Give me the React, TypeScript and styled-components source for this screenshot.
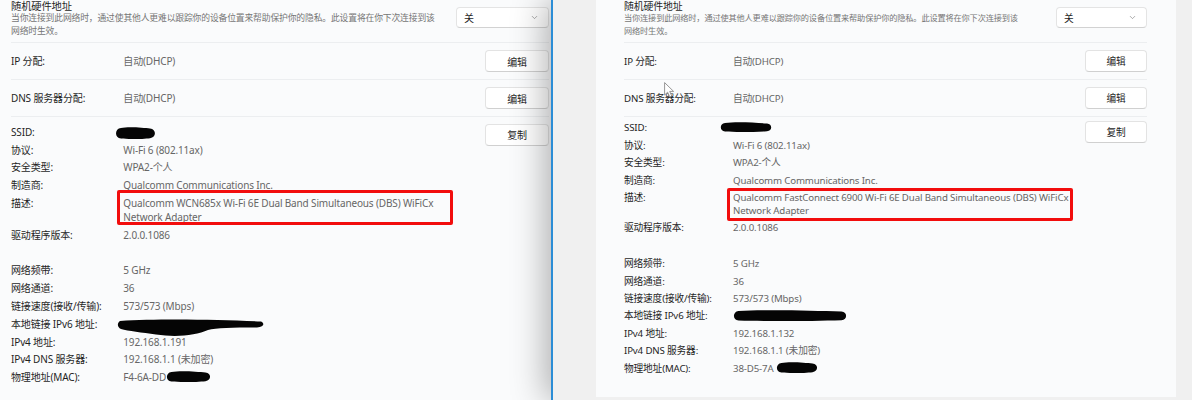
import React from "react";
import styled, { createGlobalStyle } from "styled-components";
import { ChevronDown } from "lucide-react";

type Metrics = {
  fs: number;
  titleFs: number;
  subFs: number;
  lh: number;
  pad: number;
  labelW: number;
  infoTop: number;
  copyTop: number;
  spacer: number;
  padL: number;
  padR: number;
  btnW: number;
  ddW: number;
};

type BlobSpec = { x: number; y: number; w: number; h: number; d?: string };
type BoxSpec = { x: number; y: number; w: number; h: number };
type Row = { label: string; lines?: string[]; blob?: BlobSpec; box?: BoxSpec };

type PanelData = {
  m: Metrics;
  group1: Row[];
  group2: Row[];
};

const GlobalStyle = createGlobalStyle`
  html, body { margin: 0; padding: 0; }
  body {
    width: 1192px;
    height: 400px;
    overflow: hidden;
    background: #efefef;
    font-family: "Noto Sans", "Noto Sans CJK SC", sans-serif;
  }
`;

const Screen = styled.div`
  display: flex;
  width: 1192px;
  height: 400px;
  overflow: hidden;
  background: #efefef;
`;

const BackWindow = styled.div`
  flex: none;
  display: flex;
  width: 551px;
  height: 400px;
  overflow: hidden;
  background: #fafbfc;
  position: relative;
  z-index: 0;
`;

const FrontWindow = styled.div`
  flex: 1;
  min-width: 0;
  display: flex;
  align-items: flex-start;
  height: 400px;
  box-sizing: border-box;
  border-left: 2px solid #2b8dd6;
  background: #f0f0f0;
  padding: 0 16px 3px 43px;
  box-shadow: -6px 0 32px rgba(0, 0, 0, 0.3);
  position: relative;
  z-index: 1;
`;

const Card = styled.div<{ $m: Metrics; $fill?: boolean }>`
  --fs: ${(p) => p.$m.fs}px;
  --titleFs: ${(p) => p.$m.titleFs}px;
  --subFs: ${(p) => p.$m.subFs}px;
  --lh: ${(p) => p.$m.lh}px;
  --pad: ${(p) => p.$m.pad}px;
  --labelW: ${(p) => p.$m.labelW}px;
  --btnW: ${(p) => p.$m.btnW}px;
  --ddW: ${(p) => p.$m.ddW}px;
  flex: 1;
  min-width: 0;
  height: ${(p) => (p.$fill ? "400px" : "397px")};
  box-sizing: border-box;
  background: #fafbfc;
  padding: 0 ${(p) => p.$m.padR}px 0 ${(p) => p.$m.padL}px;
  display: flex;
  flex-direction: column;
  position: relative;
  color: #1f1f1f;
  letter-spacing: -0.15px;
`;

const TopSection = styled.div`
  height: 43px;
  box-sizing: border-box;
  border-bottom: 1px solid #eceef0;
  display: flex;
  justify-content: space-between;
  align-items: flex-start;
`;

const TitleBlock = styled.div`
  display: flex;
  flex-direction: column;
  min-width: 0;
`;

const Title = styled.div`
  font-size: var(--titleFs);
  line-height: 12px;
  color: #1f1f1f;
  white-space: nowrap;
`;

const Subtitle = styled.div`
  font-size: var(--subFs);
  line-height: 12.5px;
  color: #767676;
  white-space: nowrap;
`;

const Select = styled.div`
  flex: none;
  width: var(--ddW);
  height: 21px;
  margin-top: 7px;
  box-sizing: border-box;
  background: #ffffff;
  border: 1px solid #e4e4e4;
  border-bottom-color: #d2d2d2;
  border-radius: 4px;
  display: flex;
  align-items: center;
  justify-content: space-between;
  padding: 0 9px 0 7px;
  font-size: var(--fs);
  color: #1f1f1f;
  svg {
    color: #777;
  }
`;

const ActionSection = styled.div`
  height: 37px;
  box-sizing: border-box;
  border-bottom: 1px solid #eceef0;
  display: flex;
  align-items: center;
`;

const Label = styled.div`
  flex: none;
  width: var(--labelW);
  font-size: var(--fs);
  line-height: var(--lh);
  color: #1f1f1f;
  white-space: nowrap;
`;

const Value = styled.div`
  flex: 1;
  min-width: 0;
  font-size: var(--fs);
  line-height: var(--lh);
  color: #666666;
  white-space: nowrap;
  position: relative;
`;

const Button = styled.div<{ $top?: number }>`
  flex: none;
  align-self: ${(p) => (p.$top !== undefined ? "flex-start" : "center")};
  margin-top: ${(p) => p.$top ?? 0}px;
  width: var(--btnW);
  height: 22px;
  box-sizing: border-box;
  background: #ffffff;
  border: 1px solid #e3e3e3;
  border-bottom-color: #d0d0d0;
  border-radius: 4px;
  display: flex;
  align-items: center;
  justify-content: center;
  font-size: var(--fs);
  color: #1f1f1f;
`;

const InfoSection = styled.div<{ $top: number }>`
  display: flex;
  align-items: flex-start;
  padding-top: ${(p) => p.$top}px;
`;

const InfoList = styled.div`
  flex: 1;
  min-width: 0;
  display: flex;
  flex-direction: column;
`;

const InfoRow = styled.div`
  display: flex;
  align-items: flex-start;
  padding: var(--pad) 0;
`;

const Spacer = styled.div<{ $h: number }>`
  height: ${(p) => p.$h}px;
`;

const BlobSvg = styled.svg<{ $x: number; $y: number }>`
  position: absolute;
  left: ${(p) => p.$x}px;
  top: ${(p) => p.$y}px;
  pointer-events: none;
  overflow: visible;
`;

const RedBox = styled.div<{ $x: number; $y: number; $w: number; $h: number }>`
  position: absolute;
  left: ${(p) => p.$x}px;
  top: ${(p) => p.$y}px;
  width: ${(p) => p.$w}px;
  height: ${(p) => p.$h}px;
  box-sizing: border-box;
  border: 3px solid #f20d0d;
  border-radius: 2px;
  pointer-events: none;
`;

const Cursor = styled.svg`
  position: absolute;
  left: 68px;
  top: 82px;
  pointer-events: none;
`;

function pill(w: number, h: number) {
  const r = h / 2;
  return `M ${r} 1 C ${w * 0.3} -0.5, ${w * 0.7} 0.6, ${w - r} 1.6 C ${w + 0.6} 2.2, ${w + 0.6} ${h - 1.4}, ${w - r} ${h - 0.8} C ${w * 0.7} ${h + 0.1}, ${w * 0.3} ${h + 0.4}, ${r} ${h - 0.4} C -0.6 ${h - 1}, -0.6 1.6, ${r} 1 Z`;
}

function Blob({ spec }: { spec: BlobSpec }) {
  return (
    <BlobSvg $x={spec.x} $y={spec.y} width={spec.w} height={spec.h} viewBox={`0 0 ${spec.w} ${spec.h}`}>
      <path d={spec.d ?? pill(spec.w, spec.h)} fill="#050505" />
    </BlobSvg>
  );
}

function InfoLine({ row }: { row: Row }) {
  return (
    <InfoRow>
      <Label>{row.label}</Label>
      <Value>
        {(row.lines ?? [""]).map((l, i) => (
          <div key={i}>{l || "\u00a0"}</div>
        ))}
        {row.blob && <Blob spec={row.blob} />}
        {row.box && <RedBox $x={row.box.x} $y={row.box.y} $w={row.box.w} $h={row.box.h} />}
      </Value>
    </InfoRow>
  );
}

function Panel({ data, fill, children }: { data: PanelData; fill?: boolean; children?: React.ReactNode }) {
  const { m } = data;
  return (
    <Card $m={m} $fill={fill}>
      <TopSection>
        <TitleBlock>
          <Title>随机硬件地址</Title>
          <Subtitle>当你连接到此网络时，通过使其他人更难以跟踪你的设备位置来帮助保护你的隐私。此设置将在你下次连接到该</Subtitle>
          <Subtitle>网络时生效。</Subtitle>
        </TitleBlock>
        <Select>
          <span>关</span>
          <ChevronDown size={9} strokeWidth={1.6} />
        </Select>
      </TopSection>
      <ActionSection>
        <Label>IP 分配:</Label>
        <Value>自动(DHCP)</Value>
        <Button>编辑</Button>
      </ActionSection>
      <ActionSection>
        <Label>DNS 服务器分配:</Label>
        <Value>自动(DHCP)</Value>
        <Button>编辑</Button>
      </ActionSection>
      <InfoSection $top={m.infoTop}>
        <InfoList>
          {data.group1.map((r) => (
            <InfoLine key={r.label} row={r} />
          ))}
          <Spacer $h={m.spacer} />
          {data.group2.map((r) => (
            <InfoLine key={r.label} row={r} />
          ))}
        </InfoList>
        <Button $top={m.copyTop - m.infoTop}>复制</Button>
      </InfoSection>
      {children}
    </Card>
  );
}

const LEFT: PanelData = {
  m: {
    fs: 10,
    titleFs: 10.3,
    subFs: 8.8,
    lh: 14,
    pad: 1.9,
    labelW: 112.3,
    infoTop: 5.85,
    copyTop: 7,
    spacer: 18,
    padL: 11,
    padR: 2,
    btnW: 64,
    ddW: 93,
  },
  group1: [
    { label: "SSID:", blob: { x: -8, y: 2, w: 41, h: 12 } },
    { label: "协议:", lines: ["Wi-Fi 6 (802.11ax)"] },
    { label: "安全类型:", lines: ["WPA2-个人"] },
    { label: "制造商:", lines: ["Qualcomm Communications Inc."] },
    {
      label: "描述:",
      lines: ["Qualcomm WCN685x Wi-Fi 6E Dual Band Simultaneous (DBS) WiFiCx", "Network Adapter"],
      box: { x: -6.3, y: -5.8, w: 336, h: 35 },
    },
    { label: "驱动程序版本:", lines: ["2.0.0.1086"] },
  ],
  group2: [
    { label: "网络频带:", lines: ["5 GHz"] },
    { label: "网络通道:", lines: ["36"] },
    { label: "链接速度(接收/传输):", lines: ["573/573 (Mbps)"] },
    {
      label: "本地链接 IPv6 地址:",
      blob: {
        x: -5,
        y: 0.5,
        w: 146,
        h: 21,
        d: "M2 4 C40 1.5, 100 2.5, 143 4.5 C147 6.5, 146 10, 139 10.5 C115 10.5, 98 11, 90 13 C78 18.5, 58 20.5, 38 17.5 C24 15.5, 10 14, 3 12 C-1 10, -1 6, 2 4 Z",
      },
    },
    { label: "IPv4 地址:", lines: ["192.168.1.191"] },
    { label: "IPv4 DNS 服务器:", lines: ["192.168.1.1 (未加密)"] },
    { label: "物理地址(MAC):", lines: ["F4-6A-DD"], blob: { x: 42.5, y: 1.2, w: 45, h: 11 } },
  ],
};

const RIGHT: PanelData = {
  m: {
    fs: 9.7,
    titleFs: 9.9,
    subFs: 8.2,
    lh: 13,
    pad: 2.2,
    labelW: 109,
    infoTop: 2.3,
    copyTop: 4,
    spacer: 18.6,
    padL: 28,
    padR: 29,
    btnW: 62,
    ddW: 91,
  },
  group1: [
    { label: "SSID:", blob: { x: -13, y: 0.5, w: 52, h: 10 } },
    { label: "协议:", lines: ["Wi-Fi 6 (802.11ax)"] },
    { label: "安全类型:", lines: ["WPA2-个人"] },
    { label: "制造商:", lines: ["Qualcomm Communications Inc."] },
    {
      label: "描述:",
      lines: ["Qualcomm FastConnect 6900 Wi-Fi 6E Dual Band Simultaneous (DBS) WiFiCx", "Network Adapter"],
      box: { x: -6.3, y: -2.9, w: 346, h: 33 },
    },
    { label: "驱动程序版本:", lines: ["2.0.0.1086"] },
  ],
  group2: [
    { label: "网络频带:", lines: ["5 GHz"] },
    { label: "网络通道:", lines: ["36"] },
    { label: "链接速度(接收/传输):", lines: ["573/573 (Mbps)"] },
    { label: "本地链接 IPv6 地址:", blob: { x: 0, y: 0.3, w: 114, h: 11 } },
    { label: "IPv4 地址:", lines: ["192.168.1.132"] },
    { label: "IPv4 DNS 服务器:", lines: ["192.168.1.1 (未加密)"] },
    { label: "物理地址(MAC):", lines: ["38-D5-7A"], blob: { x: 43, y: 0, w: 42, h: 11 } },
  ],
};

export default function App() {
  return (
    <>
      <GlobalStyle />
      <Screen>
        <BackWindow>
          <Panel data={LEFT} fill />
        </BackWindow>
        <FrontWindow>
          <Panel data={RIGHT}>
            <Cursor width="11" height="16" viewBox="0 0 11 16">
              <path d="M0.6 0.6 L0.6 13 L3.6 10.2 L5.8 15 L7.8 14.1 L5.7 9.4 L9.6 9.4 Z" fill="#ffffff" stroke="#8a8a8a" strokeWidth="0.9" strokeLinejoin="round" />
            </Cursor>
          </Panel>
        </FrontWindow>
      </Screen>
    </>
  );
}
